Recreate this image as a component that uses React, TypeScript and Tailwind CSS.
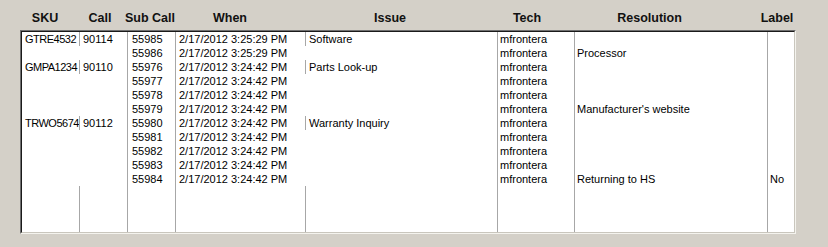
import React from "react";

type Row = {
  sku?: string;
  call?: string;
  sub: string;
  when: string;
  issue?: string;
  tech: string;
  resolution?: string;
  label?: string;
  group?: boolean;
};

const rows: Row[] = [
  { sku: "GTRE4532", call: "90114", sub: "55985", when: "2/17/2012 3:25:29 PM", issue: "Software", tech: "mfrontera", group: true },
  { sub: "55986", when: "2/17/2012 3:25:29 PM", tech: "mfrontera", resolution: "Processor" },
  { sku: "GMPA1234", call: "90110", sub: "55976", when: "2/17/2012 3:24:42 PM", issue: "Parts Look-up", tech: "mfrontera", group: true },
  { sub: "55977", when: "2/17/2012 3:24:42 PM", tech: "mfrontera" },
  { sub: "55978", when: "2/17/2012 3:24:42 PM", tech: "mfrontera" },
  { sub: "55979", when: "2/17/2012 3:24:42 PM", tech: "mfrontera", resolution: "Manufacturer's website" },
  { sku: "TRWO5674", call: "90112", sub: "55980", when: "2/17/2012 3:24:42 PM", issue: "Warranty Inquiry", tech: "mfrontera", group: true },
  { sub: "55981", when: "2/17/2012 3:24:42 PM", tech: "mfrontera" },
  { sub: "55982", when: "2/17/2012 3:24:42 PM", tech: "mfrontera" },
  { sub: "55983", when: "2/17/2012 3:24:42 PM", tech: "mfrontera" },
  { sub: "55984", when: "2/17/2012 3:24:42 PM", tech: "mfrontera", resolution: "Returning to HS", label: "No" },
];

const headers: { text: string; w: string }[] = [
  { text: "SKU", w: "w-[50px]" },
  { text: "Call", w: "w-[60px]" },
  { text: "Sub Call", w: "w-[40px]" },
  { text: "When", w: "w-[120px]" },
  { text: "Issue", w: "w-[200px]" },
  { text: "Tech", w: "w-[74px]" },
  { text: "Resolution", w: "w-[171px]" },
  { text: "Label", w: "w-[84px]" },
];

const line = "border-l border-[#a7a7a7]";
const cell = "h-[14px] leading-[14px] whitespace-nowrap overflow-hidden";

export default function App() {
  return (
    <div className="w-[828px] h-[247px] bg-[#d4d0c8] font-['Liberation_Sans',Arial,sans-serif] text-black">
      {/* column captions */}
      <div className="flex h-[30px] pl-[20px] pt-[11px] text-[12.5px] font-bold leading-[14px] text-[#111]">
        {headers.map((h) => (
          <div key={h.text} className={`${h.w} flex justify-center whitespace-nowrap`}>
            {h.text}
          </div>
        ))}
      </div>

      {/* sunken list box */}
      <div className="ml-[20px] w-[776px] h-[204px] border-t border-l border-[#6f6f6f] border-b border-r border-b-[#f4f3ee] border-r-[#f4f3ee]">
        <div className="h-full border-t border-l border-[#1a1a1a] border-b border-r border-b-[#c9c6bd] border-r-[#c9c6bd] bg-white">
          <div className="grid h-full grid-cols-[57px_48px_48px_130px_192px_77px_193px_27px] grid-rows-[repeat(11,14px)_1fr] text-[11px]">
            {rows.map((r, i) => (
              <React.Fragment key={i}>
                <div className={`${cell} pl-[3px] tracking-[-0.5px]`}>{r.sku}</div>
                <div className={`${cell} pl-[3px] ${r.group ? line : ""}`}>{r.call}</div>
                <div className={`${cell} pl-[4px] ${line}`}>{r.sub}</div>
                <div className={`${cell} pl-[3px] ${line}`}>{r.when}</div>
                <div className={`${cell} pl-[3px] ${r.group ? line : ""}`}>{r.issue}</div>
                <div className={`${cell} pl-[2px] ${line}`}>{r.tech}</div>
                <div className={`${cell} pl-[2px] ${line}`}>{r.resolution}</div>
                <div className={`${cell} pl-[2px] ${line}`}>{r.label}</div>
              </React.Fragment>
            ))}
            {/* empty space below the last row */}
            <div />
            <div className={line} />
            <div className={line} />
            <div className={line} />
            <div className={line} />
            <div className={line} />
            <div className={line} />
            <div className={line} />
          </div>
        </div>
      </div>
    </div>
  );
}
